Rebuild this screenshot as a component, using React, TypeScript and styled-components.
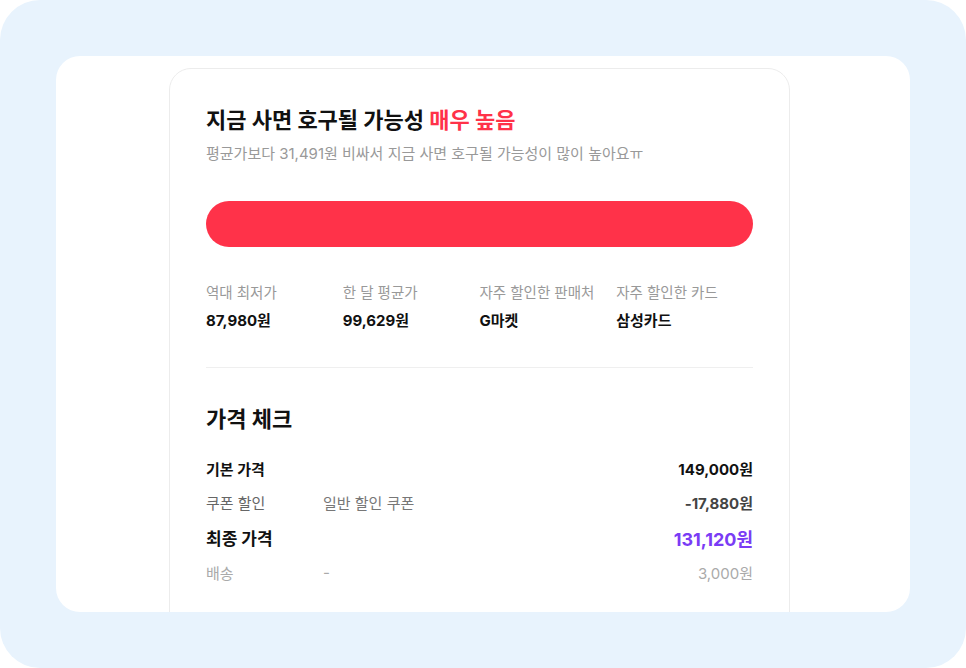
import { createGlobalStyle, styled } from "styled-components";

const GlobalStyle = createGlobalStyle`
    html, body {
        margin: 0;
        padding: 0;
        background: #ffffff;
    }
    * {
        box-sizing: border-box;
    }
    body {
        font-family: Inter, "Noto Sans CJK KR", "Noto Sans", sans-serif;
        color: #111;
    }
`;

interface IStat {
    label: string;
    value: string;
}

interface IPriceRow {
    label: string;
    note?: string;
    value: string;
    tone: 'base' | 'discount' | 'final' | 'muted';
}

const stats: IStat[] = [
    { label: '역대 최저가', value: '87,980원' },
    { label: '한 달 평균가', value: '99,629원' },
    { label: '자주 할인한 판매처', value: 'G마켓' },
    { label: '자주 할인한 카드', value: '삼성카드' },
];

const rows: IPriceRow[] = [
    { label: '기본 가격', value: '149,000원', tone: 'base' },
    { label: '쿠폰 할인', note: '일반 할인 쿠폰', value: '-17,880원', tone: 'discount' },
    { label: '최종 가격', value: '131,120원', tone: 'final' },
    { label: '배송', note: '-', value: '3,000원', tone: 'muted' },
];

const App = () => {
    return (
        <>
            <GlobalStyle />
            <Frame>
                <Sheet>
                    <PriceCard>
                        <Title>지금 사면 호구될 가능성 <Danger>매우 높음</Danger></Title>
                        <Desc>평균가보다 31,491원 비싸서 지금 사면 호구될 가능성이 많이 높아요ㅠ</Desc>
                        <Gauge />

                        <StatGrid>
                            {stats.map(stat => (
                                <StatItem key={stat.label}>
                                    <StatLabel>{stat.label}</StatLabel>
                                    <StatValue>{stat.value}</StatValue>
                                </StatItem>
                            ))}
                        </StatGrid>

                        <Divider />

                        <SectionHead>가격 체크</SectionHead>
                        <PriceList>
                            {rows.map(row => (
                                <PriceRow key={row.label} $tone={row.tone}>
                                    <RowLabel $tone={row.tone}>{row.label}</RowLabel>
                                    <RowNote $tone={row.tone}>{row.note ?? ''}</RowNote>
                                    <RowValue $tone={row.tone}>{row.value}</RowValue>
                                </PriceRow>
                            ))}
                        </PriceList>
                    </PriceCard>
                </Sheet>
            </Frame>
        </>
    );
}

type Tone = IPriceRow['tone'];

const labelColor: Record<Tone, string> = {
    base: '#111',
    discount: '#666',
    final: '#111',
    muted: '#aaa',
};
const valueColor: Record<Tone, string> = {
    base: '#111',
    discount: '#444',
    final: '#7a3cf5',
    muted: '#aaa',
};

const Frame = styled.div`
    width: 966px;
    height: 668px;
    padding: 56px;
    background-color: #e8f3fd;
    border-radius: 40px;
`;
const Sheet = styled.div`
    height: 556px;
    padding: 12px 0 0 113px;
    background-color: #fff;
    border-radius: 24px;
    overflow: hidden;
`;
const PriceCard = styled.section`
    width: 621px;
    min-height: 600px;
    padding: 35px 36px 0;
    border: 1px solid #ececec;
    border-radius: 22px;
`;
const Title = styled.h2`
    margin: 0;
    font-size: 22px;
    line-height: 32px;
    font-weight: 700;
    color: #111;
`;
const Danger = styled.span`
    color: #ff3249;
`;
const Desc = styled.p`
    margin: 8px 0 0;
    font-size: 15px;
    line-height: 20px;
    color: #999;
`;
const Gauge = styled.div`
    margin-top: 37px;
    height: 46px;
    background-color: #ff3249;
    border-radius: 23px;
`;
const StatGrid = styled.div`
    display: grid;
    grid-template-columns: repeat(4, 1fr);
    margin-top: 36px;
`;
const StatItem = styled.div`
    display: flex;
    flex-direction: column;
    gap: 7px;
`;
const StatLabel = styled.span`
    font-size: 14.5px;
    line-height: 20px;
    color: #999;
`;
const StatValue = styled.span`
    font-size: 15px;
    line-height: 22px;
    font-weight: 700;
    color: #111;
`;
const Divider = styled.hr`
    margin: 35px 0 0;
    border: none;
    border-top: 1px solid #efefef;
`;
const SectionHead = styled.h3`
    margin: 36px 0 0;
    font-size: 22px;
    line-height: 30px;
    font-weight: 700;
    color: #111;
`;
const PriceList = styled.div`
    display: flex;
    flex-direction: column;
    margin-top: 18px;
`;
const PriceRow = styled.div<{ $tone: Tone }>`
    display: grid;
    grid-template-columns: 117px 1fr auto;
    align-items: center;
    height: ${props => props.$tone === 'base' ? '33px' : '35px'};
`;
const RowLabel = styled.span<{ $tone: Tone }>`
    font-size: ${props => props.$tone === 'final' ? '17px' : '15px'};
    font-weight: ${props => props.$tone === 'final' || props.$tone === 'base' ? 700 : 400};
    color: ${props => labelColor[props.$tone]};
`;
const RowNote = styled.span<{ $tone: Tone }>`
    font-size: 15px;
    color: ${props => props.$tone === 'muted' ? '#aaa' : '#777'};
`;
const RowValue = styled.span<{ $tone: Tone }>`
    font-size: ${props => props.$tone === 'final' ? '18px' : '15px'};
    font-weight: ${props => props.$tone === 'muted' ? 400 : 700};
    color: ${props => valueColor[props.$tone]};
`;

export default App;
